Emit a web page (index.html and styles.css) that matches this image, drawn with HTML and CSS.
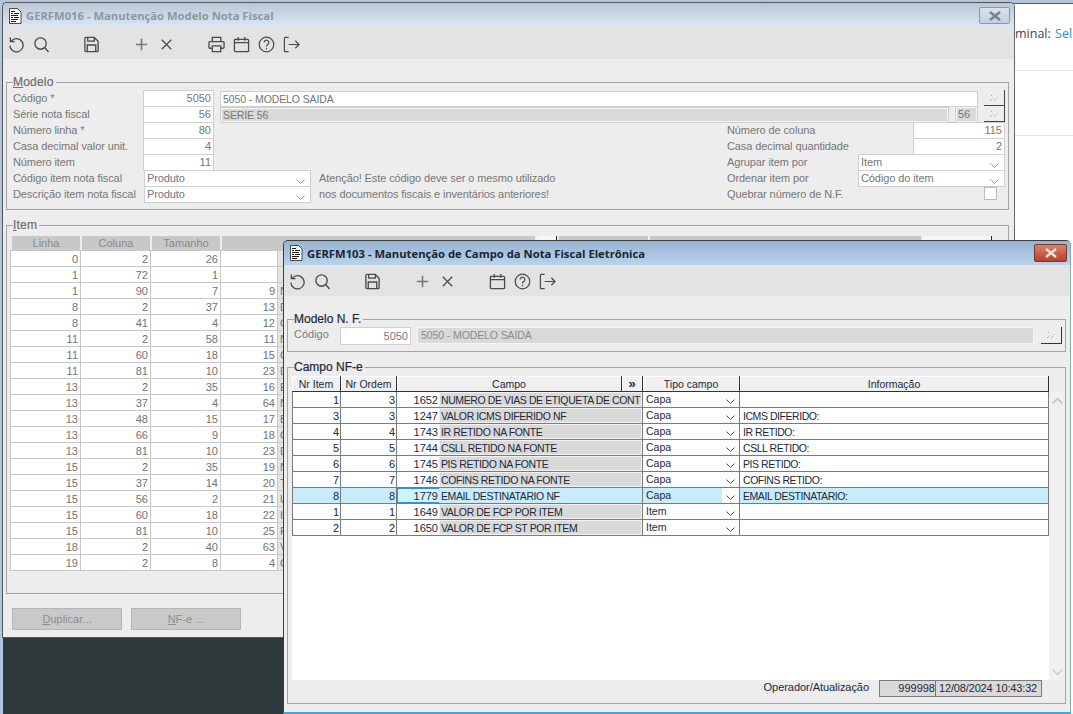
FILE: index.html
```html
<!DOCTYPE html>
<html lang="pt-BR">
<head>
  <meta charset="UTF-8" />
  <title>GERFM103 - Manutenção de Campo da Nota Fiscal Eletrônica</title>
  <link rel="stylesheet" href="styles.css">
</head>
<body>

<svg class="sprite" width="0" height="0">
  <symbol id="i-doc" viewBox="0 0 14 16">
    <path d="M1.500 .5h8l3.500 3.500v11.500h-11.500z" fill="#fff" stroke="#222" stroke-width=".8"/>
    <path d="M3 3.500h4M3 5.500h2M6 5.500h5M3 7.500h7M3 9.500h2M6 9.500h5M3 11.500h7M3 13.500h5" stroke="#000" stroke-width=".9" fill="none"/>
  </symbol>
  <symbol id="i-undo" viewBox="0 0 18 18">
    <path d="M3.500 5.500A7 7 0 1 1 2 10M2.500 1.500v4.500h4.500" fill="none" stroke="currentColor" stroke-width="1.400"/>
  </symbol>
  <symbol id="i-search" viewBox="0 0 18 18">
    <circle cx="8" cy="8" r="6" fill="none" stroke="currentColor" stroke-width="1.400"/>
    <path d="M12.500 12.500l4 4.500" fill="none" stroke="currentColor" stroke-width="1.400"/>
  </symbol>
  <symbol id="i-save" viewBox="0 0 18 18">
    <path d="M2 2.500a1 1 0 0 1 1-1h9l4 4v10a1 1 0 0 1-1 1H3a1 1 0 0 1-1-1z" fill="none" stroke="currentColor" stroke-width="1.400"/>
    <path d="M5 1.500v4h7v-4M4.500 16.500v-7h9v7" fill="none" stroke="currentColor" stroke-width="1.400"/>
  </symbol>
  <symbol id="i-plus" viewBox="0 0 18 18">
    <path d="M9 3v12M3 9h12" fill="none" stroke="#777" stroke-width="1.700"/>
  </symbol>
  <symbol id="i-close" viewBox="0 0 18 18">
    <path d="M4 4l10 10M14 4L4 14" fill="none" stroke="currentColor" stroke-width="1.300"/>
  </symbol>
  <symbol id="i-print" viewBox="0 0 18 18">
    <path d="M4.500 6V1.500h9V6M4.500 13H2a1 1 0 0 1-1-1V7a1 1 0 0 1 1-1h14a1 1 0 0 1 1 1v5a1 1 0 0 1-1 1h-2.500M4.500 10.500h9v6h-9z" fill="none" stroke="currentColor" stroke-width="1.400"/>
  </symbol>
  <symbol id="i-cal" viewBox="0 0 18 18">
    <path d="M2.500 3.500h13a1 1 0 0 1 1 1v11a1 1 0 0 1-1 1h-13a1 1 0 0 1-1-1v-11a1 1 0 0 1 1-1zM1.500 7h15M5.500 1v4M12.500 1v4" fill="none" stroke="currentColor" stroke-width="1.400"/>
  </symbol>
  <symbol id="i-help" viewBox="0 0 18 18">
    <circle cx="9" cy="9" r="7.700" fill="none" stroke="currentColor" stroke-width="1.300"/>
    <path d="M6.500 7a2.500 2.500 0 1 1 3.800 2.100c-.9.600-1.300 1-1.300 2" fill="none" stroke="currentColor" stroke-width="1.300"/>
    <path d="M9 12.500v1.500" stroke="currentColor" stroke-width="1.300"/>
  </symbol>
  <symbol id="i-exit" viewBox="0 0 18 18">
    <path d="M6 1.500H2.500a1 1 0 0 0-1 1v13a1 1 0 0 0 1 1H6M6 9h11M13 5l4 4-4 4" fill="none" stroke="currentColor" stroke-width="1.300"/>
  </symbol>
  <symbol id="i-dots" viewBox="0 0 10 8">
    <path d="M1 7l3-3M5 7l4-4M2 1l1.500 1" fill="none" stroke="#9a9a9a" stroke-width="1" stroke-dasharray="1 1"/>
  </symbol>
  <symbol id="i-chev" viewBox="0 0 9 5">
    <path d="M.5 .5l4 4 4-4" fill="none" stroke="currentColor" stroke-width="1"/>
  </symbol>
  <symbol id="i-up" viewBox="0 0 9 5">
    <path d="M.5 4.500l4-4 4 4" fill="none" stroke="currentColor" stroke-width="1.500"/>
  </symbol>
  <symbol id="i-x" viewBox="0 0 14 10">
    <path d="M2 1l10 8M12 1L2 9" fill="none" stroke="currentColor" stroke-width="2.400"/>
  </symbol>
</svg>

<div class="desktop">

  <div class="page-behind">
    <div class="page-top">minal: <span class="page-link">Sel</span></div>
    <div class="page-rule"></div>
    <div class="page-rule"></div>
  </div>

  <!-- janela de tras -->
  <div class="window window-back">
    <div class="titlebar">
      <svg class="title-icon"><use href="#i-doc"/></svg>
      <span class="title-text">GERFM016 - Manutenção Modelo Nota Fiscal</span>
      <div class="close-btn"><svg width="14" height="10"><use href="#i-x"/></svg></div>
    </div>
    <div class="toolbar">
      <span class="tb"><svg><use href="#i-undo"/></svg></span>
      <span class="tb"><svg><use href="#i-search"/></svg></span>
      <span class="tb"></span>
      <span class="tb"><svg><use href="#i-save"/></svg></span>
      <span class="tb"></span>
      <span class="tb"><svg><use href="#i-plus"/></svg></span>
      <span class="tb"><svg><use href="#i-close"/></svg></span>
      <span class="tb"></span>
      <span class="tb"><svg><use href="#i-print"/></svg></span>
      <span class="tb"><svg><use href="#i-cal"/></svg></span>
      <span class="tb"><svg><use href="#i-help"/></svg></span>
      <span class="tb"><svg><use href="#i-exit"/></svg></span>
    </div>
    <div class="window-body">
      <fieldset class="group group-modelo">
        <legend><u>M</u>odelo</legend>
        <div class="form-grid">
          <span class="lbl row1">Código *</span>
          <span class="inp num row1 col-num">5050</span>
          <span class="inp caps row1 col-desc">5050 - MODELO SAIDA</span>
          <span class="look-btn row1 col-btn"><svg width="10" height="8"><use href="#i-dots"/></svg></span>

          <span class="lbl row2">Série nota fiscal</span>
          <span class="inp num row2 col-num">56</span>
          <span class="inp caps off row2 col-desc-short">SERIE 56</span>
          <span class="inp off row2 col-small">56</span>
          <span class="look-btn row2 col-btn"><svg width="10" height="8"><use href="#i-dots"/></svg></span>

          <span class="lbl row3">Número linha *</span>
          <span class="inp num row3 col-num">80</span>
          <span class="lbl row3 col-rlabel">Número de coluna</span>
          <span class="inp num row3 col-rnum">115</span>

          <span class="lbl row4">Casa decimal valor unit.</span>
          <span class="inp num row4 col-num">4</span>
          <span class="lbl row4 col-rlabel">Casa decimal quantidade</span>
          <span class="inp num row4 col-rnum">2</span>

          <span class="lbl row5">Número item</span>
          <span class="inp num row5 col-num">11</span>
          <span class="lbl row5 col-rlabel">Agrupar item por</span>
          <span class="inp sel row5 col-rsel">Item<svg width="9" height="5"><use href="#i-chev"/></svg></span>

          <span class="lbl row6">Código item nota fiscal</span>
          <span class="inp sel row6 col-lsel">Produto<svg width="9" height="5"><use href="#i-chev"/></svg></span>
          <span class="lbl row6 col-note">Atenção! Este código deve ser o mesmo utilizado</span>
          <span class="lbl row6 col-rlabel">Ordenar item por</span>
          <span class="inp sel row6 col-rsel">Código do item<svg width="9" height="5"><use href="#i-chev"/></svg></span>

          <span class="lbl row7">Descrição item nota fiscal</span>
          <span class="inp sel row7 col-lsel">Produto<svg width="9" height="5"><use href="#i-chev"/></svg></span>
          <span class="lbl row7 col-note">nos documentos fiscais e inventários anteriores!</span>
          <span class="lbl row7 col-rlabel">Quebrar número de N.F.</span>
          <span class="check row7 col-btn"></span>
        </div>
      </fieldset>

      <fieldset class="group group-item">
        <legend><u>I</u>tem</legend>
        <div class="item-head">
          <span class="ih ih-num">Linha</span>
          <span class="ih ih-num">Coluna</span>
          <span class="ih ih-num">Tamanho</span>
          <span class="ih ih-a"></span>
          <span class="ih ih-white"></span>
          <span class="ih ih-b"></span>
          <span class="ih ih-c"></span>
          <span class="ih ih-white ih-last"></span>
        </div>
        <table class="item-table">
          <tr><td>0</td><td>2</td><td>26</td><td class="c4"></td><td class="ct"></td></tr>
          <tr><td>1</td><td>72</td><td>1</td><td class="c4"></td><td class="ct"></td></tr>
          <tr><td>1</td><td>90</td><td>7</td><td class="c4">9</td><td class="ct">N</td></tr>
          <tr><td>8</td><td>2</td><td>37</td><td class="c4">13</td><td class="ct">D</td></tr>
          <tr><td>8</td><td>41</td><td>4</td><td class="c4">12</td><td class="ct">C</td></tr>
          <tr><td>11</td><td>2</td><td>58</td><td class="c4">11</td><td class="ct">N</td></tr>
          <tr><td>11</td><td>60</td><td>18</td><td class="c4">15</td><td class="ct">C</td></tr>
          <tr><td>11</td><td>81</td><td>10</td><td class="c4">23</td><td class="ct">D</td></tr>
          <tr><td>13</td><td>2</td><td>35</td><td class="c4">16</td><td class="ct">E</td></tr>
          <tr><td>13</td><td>37</td><td>4</td><td class="c4">64</td><td class="ct">N</td></tr>
          <tr><td>13</td><td>48</td><td>15</td><td class="c4">17</td><td class="ct">B</td></tr>
          <tr><td>13</td><td>66</td><td>9</td><td class="c4">18</td><td class="ct">C</td></tr>
          <tr><td>13</td><td>81</td><td>10</td><td class="c4">23</td><td class="ct">D</td></tr>
          <tr><td>15</td><td>2</td><td>35</td><td class="c4">19</td><td class="ct">N</td></tr>
          <tr><td>15</td><td>37</td><td>14</td><td class="c4">20</td><td class="ct">T</td></tr>
          <tr><td>15</td><td>56</td><td>2</td><td class="c4">21</td><td class="ct">U</td></tr>
          <tr><td>15</td><td>60</td><td>18</td><td class="c4">22</td><td class="ct">I</td></tr>
          <tr><td>15</td><td>81</td><td>10</td><td class="c4">25</td><td class="ct">F</td></tr>
          <tr><td>18</td><td>2</td><td>40</td><td class="c4">63</td><td class="ct">V</td></tr>
          <tr><td>19</td><td>2</td><td>8</td><td class="c4">4</td><td class="ct">C</td></tr>
        </table>
      </fieldset>

      <div class="action-row">
        <span class="action-btn"><u>D</u>uplicar...</span>
        <span class="action-btn"><u>N</u>F-e ...</span>
      </div>
    </div>
  </div>

  <!-- janela da frente -->
  <div class="window window-front">
    <div class="titlebar">
      <svg class="title-icon"><use href="#i-doc"/></svg>
      <span class="title-text">GERFM103 - Manutenção de Campo da Nota Fiscal Eletrônica</span>
      <div class="close-btn"><svg width="14" height="10"><use href="#i-x"/></svg></div>
    </div>
    <div class="toolbar">
      <span class="tb"><svg><use href="#i-undo"/></svg></span>
      <span class="tb"><svg><use href="#i-search"/></svg></span>
      <span class="tb"></span>
      <span class="tb"><svg><use href="#i-save"/></svg></span>
      <span class="tb"></span>
      <span class="tb"><svg><use href="#i-plus"/></svg></span>
      <span class="tb"><svg><use href="#i-close"/></svg></span>
      <span class="tb"></span>
      <span class="tb"><svg><use href="#i-cal"/></svg></span>
      <span class="tb"><svg><use href="#i-help"/></svg></span>
      <span class="tb"><svg><use href="#i-exit"/></svg></span>
    </div>
    <div class="window-body">
      <fieldset class="group group-nf">
        <legend>Modelo N. F.</legend>
        <div class="nf-row">
          <span class="nf-label">Código</span>
          <span class="nf-code">5050</span>
          <span class="nf-desc">5050 - MODELO SAIDA</span>
          <span class="nf-btn"><svg width="10" height="8"><use href="#i-dots"/></svg></span>
        </div>
      </fieldset>

      <fieldset class="group group-campo">
        <legend>Campo NF-e</legend>
        <div class="grid-wrap">
          <div class="grid-main">
            <table class="campo-table">
              <colgroup>
                <col class="w-item"><col class="w-ordem"><col class="w-code"><col class="w-desc"><col class="w-more"><col class="w-tipo"><col class="w-info">
              </colgroup>
              <thead>
                <tr>
                  <th>Nr Item</th><th>Nr Ordem</th><th colspan="2">Campo</th><th class="th-more">»</th><th>Tipo campo</th><th>Informação</th>
                </tr>
              </thead>
              <tbody>
                <tr><td class="n">1</td><td class="n">3</td><td class="n code">1652</td><td colspan="2" class="desc">NUMERO DE VIAS DE ETIQUETA DE CONT</td><td class="tipo"><div class="tipo-box"><span>Capa</span><svg width="9" height="5"><use href="#i-chev"/></svg></div></td><td class="info"></td></tr>
                <tr><td class="n">3</td><td class="n">3</td><td class="n code">1247</td><td colspan="2" class="desc">VALOR ICMS DIFERIDO NF</td><td class="tipo"><div class="tipo-box"><span>Capa</span><svg width="9" height="5"><use href="#i-chev"/></svg></div></td><td class="info">ICMS DIFERIDO:</td></tr>
                <tr><td class="n">4</td><td class="n">4</td><td class="n code">1743</td><td colspan="2" class="desc">IR RETIDO NA FONTE</td><td class="tipo"><div class="tipo-box"><span>Capa</span><svg width="9" height="5"><use href="#i-chev"/></svg></div></td><td class="info">IR RETIDO:</td></tr>
                <tr><td class="n">5</td><td class="n">5</td><td class="n code">1744</td><td colspan="2" class="desc">CSLL RETIDO NA FONTE</td><td class="tipo"><div class="tipo-box"><span>Capa</span><svg width="9" height="5"><use href="#i-chev"/></svg></div></td><td class="info">CSLL RETIDO:</td></tr>
                <tr><td class="n">6</td><td class="n">6</td><td class="n code">1745</td><td colspan="2" class="desc">PIS RETIDO NA FONTE</td><td class="tipo"><div class="tipo-box"><span>Capa</span><svg width="9" height="5"><use href="#i-chev"/></svg></div></td><td class="info">PIS RETIDO:</td></tr>
                <tr><td class="n">7</td><td class="n">7</td><td class="n code">1746</td><td colspan="2" class="desc">COFINS RETIDO NA FONTE</td><td class="tipo"><div class="tipo-box"><span>Capa</span><svg width="9" height="5"><use href="#i-chev"/></svg></div></td><td class="info">COFINS RETIDO:</td></tr>
                <tr class="selected"><td class="n">8</td><td class="n">8</td><td class="n code">1779</td><td colspan="2" class="desc">EMAIL DESTINATARIO NF</td><td class="tipo"><div class="tipo-box"><span>Capa</span><svg width="9" height="5"><use href="#i-chev"/></svg></div></td><td class="info">EMAIL DESTINATARIO:</td></tr>
                <tr><td class="n">1</td><td class="n">1</td><td class="n code">1649</td><td colspan="2" class="desc">VALOR DE FCP POR ITEM</td><td class="tipo"><div class="tipo-box"><span>Item</span><svg width="9" height="5"><use href="#i-chev"/></svg></div></td><td class="info"></td></tr>
                <tr><td class="n">2</td><td class="n">2</td><td class="n code">1650</td><td colspan="2" class="desc">VALOR DE FCP ST POR ITEM</td><td class="tipo"><div class="tipo-box"><span>Item</span><svg width="9" height="5"><use href="#i-chev"/></svg></div></td><td class="info"></td></tr>
              </tbody>
            </table>
          </div>
          <div class="scrollbar">
            <svg width="11" height="6"><use href="#i-up"/></svg>
            <svg width="11" height="6"><use href="#i-chev"/></svg>
          </div>
        </div>
        <div class="status-row">
          <span class="status-label">Operador/Atualização</span>
          <div class="status-boxes">
            <span class="status-op">999998</span>
            <span class="status-date">12/08/2024 10:43:32</span>
          </div>
        </div>
      </fieldset>
    </div>
  </div>

</div>

</body>
</html>
```

FILE: styles.css
```css
* { box-sizing: border-box; }

html, body {
  margin: 0;
  padding: 0;
  height: 100%;
  overflow: hidden;
}

body {
  font-family: "Liberation Sans", Arial, sans-serif;
  font-size: 11px;
  background-color: #2e393b;
}

.sprite { position: absolute; }

.desktop {
  position: relative;
  width: 1073px;
  height: 714px;
  overflow: hidden;
  background:
    linear-gradient(#b4c4dc 3px, transparent 3px),
    linear-gradient(90deg, #b4c4e0 3px, #2e393b 3px);
}

.page-behind {
  position: absolute;
  left: 1000px;
  top: 3px;
  right: 0;
  bottom: 0;
  background-color: #fff;
  border-top: 1px solid #555;
  overflow: hidden;
}
.page-top {
  padding: 21px 0 0 0;
  height: 66px;
  margin-left: 15px;
  font-family: "Open Sans", sans-serif;
  font-size: 12.500px;
  word-spacing: 1px;
  color: #444;
  white-space: nowrap;
}
.page-link { color: #2d8fc4; }
.page-rule { height: 65px; border-top: 1px solid #e2e2e2; }

.window {
  position: absolute;
  background-color: #ededed;
  overflow: hidden;
  border-radius: 5px 5px 0 0;
}
.window-back {
  left: 2px;
  top: 2px;
  width: 1013px;
  height: 636px;
  border: 1px solid #555;
  border-right-color: #666;
}
.window-front {
  left: 283px;
  top: 240px;
  width: 788px;
  height: 474px;
  border: 1px solid #3c3c3c;
  border-right-color: #8aa;
  border-bottom: 2px solid #3fa9d8;
}

.titlebar {
  display: flex;
  align-items: center;
  padding-left: 5px;
  height: 25px;
}
.window-back .titlebar { background: linear-gradient(#b9c7d5, #dde8f3); }
.window-front .titlebar {
  height: 24px;
  background: linear-gradient(#96b3d2, #b9d3ec);
}
.title-icon { width: 14px; height: 16px; flex: none; margin-right: 4px; }
.title-text {
  flex: 1;
  font-family: "Open Sans", sans-serif;
  font-weight: 700;
  font-size: 11.250px;
  color: #8d97a3;
  white-space: nowrap;
}
.window-front .title-text { color: #1b2433; }

.close-btn {
  display: flex;
  align-items: center;
  justify-content: center;
  width: 31px;
  height: 17px;
  margin-right: 4px;
  border: 1px solid #8b98a6;
  border-radius: 2px;
  background: linear-gradient(#d8e2ec, #c3d0dc);
  color: #75808b;
}
.window-front .close-btn {
  width: 33px;
  height: 18px;
  margin-right: 3px;
  border-color: #7c352c;
  background: linear-gradient(#d8836f, #b8402c);
  color: #f4e6e2;
}

.toolbar {
  display: flex;
  align-items: center;
  height: 31px;
  padding: 2px 0 0 1px;
  background-color: #e3e3e3;
  color: #4a4a4a;
}
.tb {
  display: flex;
  justify-content: center;
  width: 25px;
  height: 17px;
}
.tb svg { width: 17px; height: 17px; }

.window-body { padding: 16px 5px 0 3px; }
.window-front .window-body { padding-right: 4px; }

.group {
  margin: 0;
  padding: 1px 3px 7px 6px;
  border: 1px solid #a3a3a3;
  min-width: 0;
}
.group legend {
  margin-left: 0;
  padding: 0 2px 0 0;
  font-size: 12px;
  line-height: 14px;
  letter-spacing: .2px;
  color: #6e6e6e;
  white-space: nowrap;
  -webkit-text-stroke: .2px;
}
.window-front .group legend { color: #22283a; letter-spacing: 0; }

/* formulario modelo */
.form-grid {
  display: grid;
  grid-template-columns: 130px 71px 6px 91px 8px 408px 131px 55px 36px 6px 23px 6px 21px;
  grid-auto-rows: 16px;
  color: #767676;
}
.lbl { grid-column: 1; line-height: 17px; white-space: nowrap; letter-spacing: -.1px; }
.row1 { grid-row: 1; }
.row2 { grid-row: 2; }
.row3 { grid-row: 3; }
.row4 { grid-row: 4; }
.row5 { grid-row: 5; }
.row6 { grid-row: 6; }
.row7 { grid-row: 7; }
.col-num { grid-column: 2; }
.col-desc { grid-column: 4 / 12; }
.col-desc-short { grid-column: 4 / 10; }
.col-small { grid-column: 11; }
.col-btn { grid-column: 13; }
.col-rlabel { grid-column: 7 / 9; }
.col-rnum { grid-column: 9 / 14; }
.col-rsel { grid-column: 8 / 14; }
.col-lsel { grid-column: 2 / 5; margin-left: 1px; }
.col-note { grid-column: 6; }

.inp {
  display: block;
  padding: 0 2px;
  height: 17px;
  line-height: 15px;
  background-color: #fff;
  border: 1px solid #cfcfcf;
  white-space: nowrap;
  z-index: 1;
}
.num { text-align: right; }
.caps { font-size: 10.500px; letter-spacing: -.1px; }
.off { background-color: #d9d9d9; outline: 1px solid #f5f5f5; outline-offset: -2px; }
.col-desc, .col-desc-short { margin-top: 1px; height: 16px; line-height: 14px; }
.sel {
  display: flex;
  justify-content: space-between;
  align-items: center;
  padding-right: 5px;
  line-height: 13px;
  letter-spacing: -.1px;
}
.sel svg { color: #a0a0a0; margin-top: 5px; }

.look-btn {
  display: flex;
  align-items: center;
  justify-content: center;
  height: 16px;
  background-color: #ededed;
  border-right: 1px solid #444;
  border-bottom: 1px solid #444;
}
.check {
  width: 13px;
  height: 13px;
  margin-top: 1px;
  background-color: #fff;
  border: 1px solid #bcbcbc;
}

/* grade item */
.group-item {
  height: 376px;
  margin-top: 8px;
  padding: 3px 0 0 3px;
}
.group-item legend { margin-left: 3px; }
.item-head {
  display: flex;
  gap: 2px;
  height: 15px;
  padding-left: 2px;
}
.ih {
  width: 68px;
  height: 14px;
  margin-top: 1px;
  background-color: #c8c8c8;
  color: #8a8a8a;
  text-align: center;
  line-height: 14px;
}
.ih-a { width: 313px; }
.ih-white { width: 20px; background-color: #f6f6f6; border-right: 1px solid #222; }
.ih-b { width: 89px; }
.ih-c { width: 271px; }
.ih-last { width: 69px; }

.item-table {
  border-collapse: separate;
  border-spacing: 0;
  table-layout: fixed;
  width: 800px;
  background-color: #fff;
  border-top: 1px solid #c8c8c8;
  border-left: 1px solid #c8c8c8;
  color: #727272;
}
.item-table td {
  width: 70px;
  height: 16px;
  padding: 0 2px;
  text-align: right;
  border-right: 1px solid #c8c8c8;
  border-bottom: 1px solid #c8c8c8;
  line-height: 14px;
}
.item-table td.c4 { width: 57px; }
.item-table td.ct {
  width: auto;
  text-align: left;
  background-color: #e4e4e4;
}

.action-row {
  display: flex;
  gap: 9px;
  margin: 14px 0 0 6px;
}
.action-btn {
  width: 110px;
  height: 22px;
  line-height: 20px;
  text-align: center;
  color: #8c8c8c;
  background-color: #c9c9c9;
  border: 1px solid #b6b6b6;
}

/* janela da frente */
.group-nf { padding: 1px 3px 6px 6px; }
.nf-row { display: flex; align-items: stretch; height: 18px; }
.nf-label { width: 46px; color: #7c7c7c; line-height: 15px; }
.nf-code {
  width: 71px;
  height: 18px;
  margin-right: 6px;
  padding-right: 2px;
  text-align: right;
  line-height: 17px;
  color: #7c7c7c;
  background-color: #fff;
  border: 1px solid #cfcfcf;
}
.nf-desc {
  width: 617px;
  height: 17px;
  padding-left: 3px;
  line-height: 15px;
  font-size: 10.500px;
  letter-spacing: -.1px;
  color: #8a8a8a;
  background-color: #d9d9d9;
  border: 1px solid #f5f5f5;
}
.nf-btn {
  display: flex;
  align-items: center;
  justify-content: center;
  width: 21px;
  height: 17px;
  margin-left: 7px;
  background-color: #ededed;
  border-right: 1px solid #333;
  border-bottom: 1px solid #333;
}

.group-campo {
  height: 344px;
  margin-top: 8px;
  padding: 2px 0 0 6px;
}
.grid-wrap {
  display: flex;
  margin-left: -2px;
  height: 304px;
}
.grid-main {
  width: 757px;
  background-color: #fff;
}
.campo-table {
  border-collapse: separate;
  border-spacing: 0;
  table-layout: fixed;
  width: 757px;
  color: #22283a;
}
.w-item { width: 49px; }
.w-ordem { width: 56px; }
.w-code { width: 42px; }
.w-desc { width: 183px; }
.w-more { width: 21px; }
.w-tipo { width: 97px; }
.w-info { width: 309px; }
.campo-table th {
  height: 16px;
  padding: 0;
  font-size: 10.500px;
  font-weight: 400;
  background-color: #f0f0f0;
  border-right: 1px solid #333;
  border-bottom: 1px solid #333;
  box-shadow: inset 1px 1px 0 #fff;
}
.campo-table .th-more { font-size: 13px; line-height: 12px; font-weight: 700; }
.campo-table td {
  height: 16px;
  padding: 0;
  font-size: 10.500px;
  line-height: 14px;
  white-space: nowrap;
  overflow: hidden;
  background-color: #fff;
  border-right: 1px solid #7a7a7a;
  border-bottom: 1px solid #7a7a7a;
}
.campo-table td:first-child { border-left: 1px solid #7a7a7a; }
.campo-table td.n { padding-right: 1px; text-align: right; font-size: 11px; }
.campo-table td.code { border-right: none; }
.campo-table td.desc {
  padding-left: 2px;
  letter-spacing: -.4px;
  background-color: #d9d9d9;
  box-shadow: inset 0 0 0 1px #f2f2f2;
}
.campo-table td.info { padding-left: 3px; letter-spacing: -.45px; }
.tipo-box {
  display: flex;
  justify-content: space-between;
  align-items: flex-start;
  height: 15px;
  padding: 0 4px 0 3px;
  line-height: 14px;
}
.tipo-box svg { flex: none; margin-top: 7px; color: #444; }

.selected td, .campo-table .selected td.desc { background-color: #c8ecfb; box-shadow: none; }
.campo-table .selected td.code {
  background-color: #cdf5ff;
  box-shadow: inset 1px 0 0 #3a8fd0, inset 0 -1px 0 #3a8fd0, inset 0 1px 0 #3a8fd0;
}
.campo-table .selected td.tipo { background-color: #fff; }
.selected .tipo-box { background: linear-gradient(90deg, #c8ecfb 79px, #fff 79px); }

.scrollbar {
  display: flex;
  flex-direction: column;
  justify-content: space-between;
  align-items: center;
  width: 16px;
  margin-top: 16px;
  padding: 6px 0 5px;
  background-color: #f0f0f0;
  color: #c4c4c4;
}

.status-row {
  display: flex;
  justify-content: flex-end;
  align-items: flex-start;
  gap: 10px;
  padding-right: 23px;
  color: #22283a;
}
.status-label { line-height: 15px; letter-spacing: -.05px; }
.status-boxes {
  display: flex;
  height: 17px;
  line-height: 15px;
  border: 1px solid #7a7a7a;
  background-color: #d9d9d9;
}
.status-op {
  width: 56px;
  text-align: right;
  border-right: 1px solid #7a7a7a;
}
.status-date {
  width: 105px;
  padding-left: 3px;
  letter-spacing: -.15px;
  white-space: nowrap;
}
```
